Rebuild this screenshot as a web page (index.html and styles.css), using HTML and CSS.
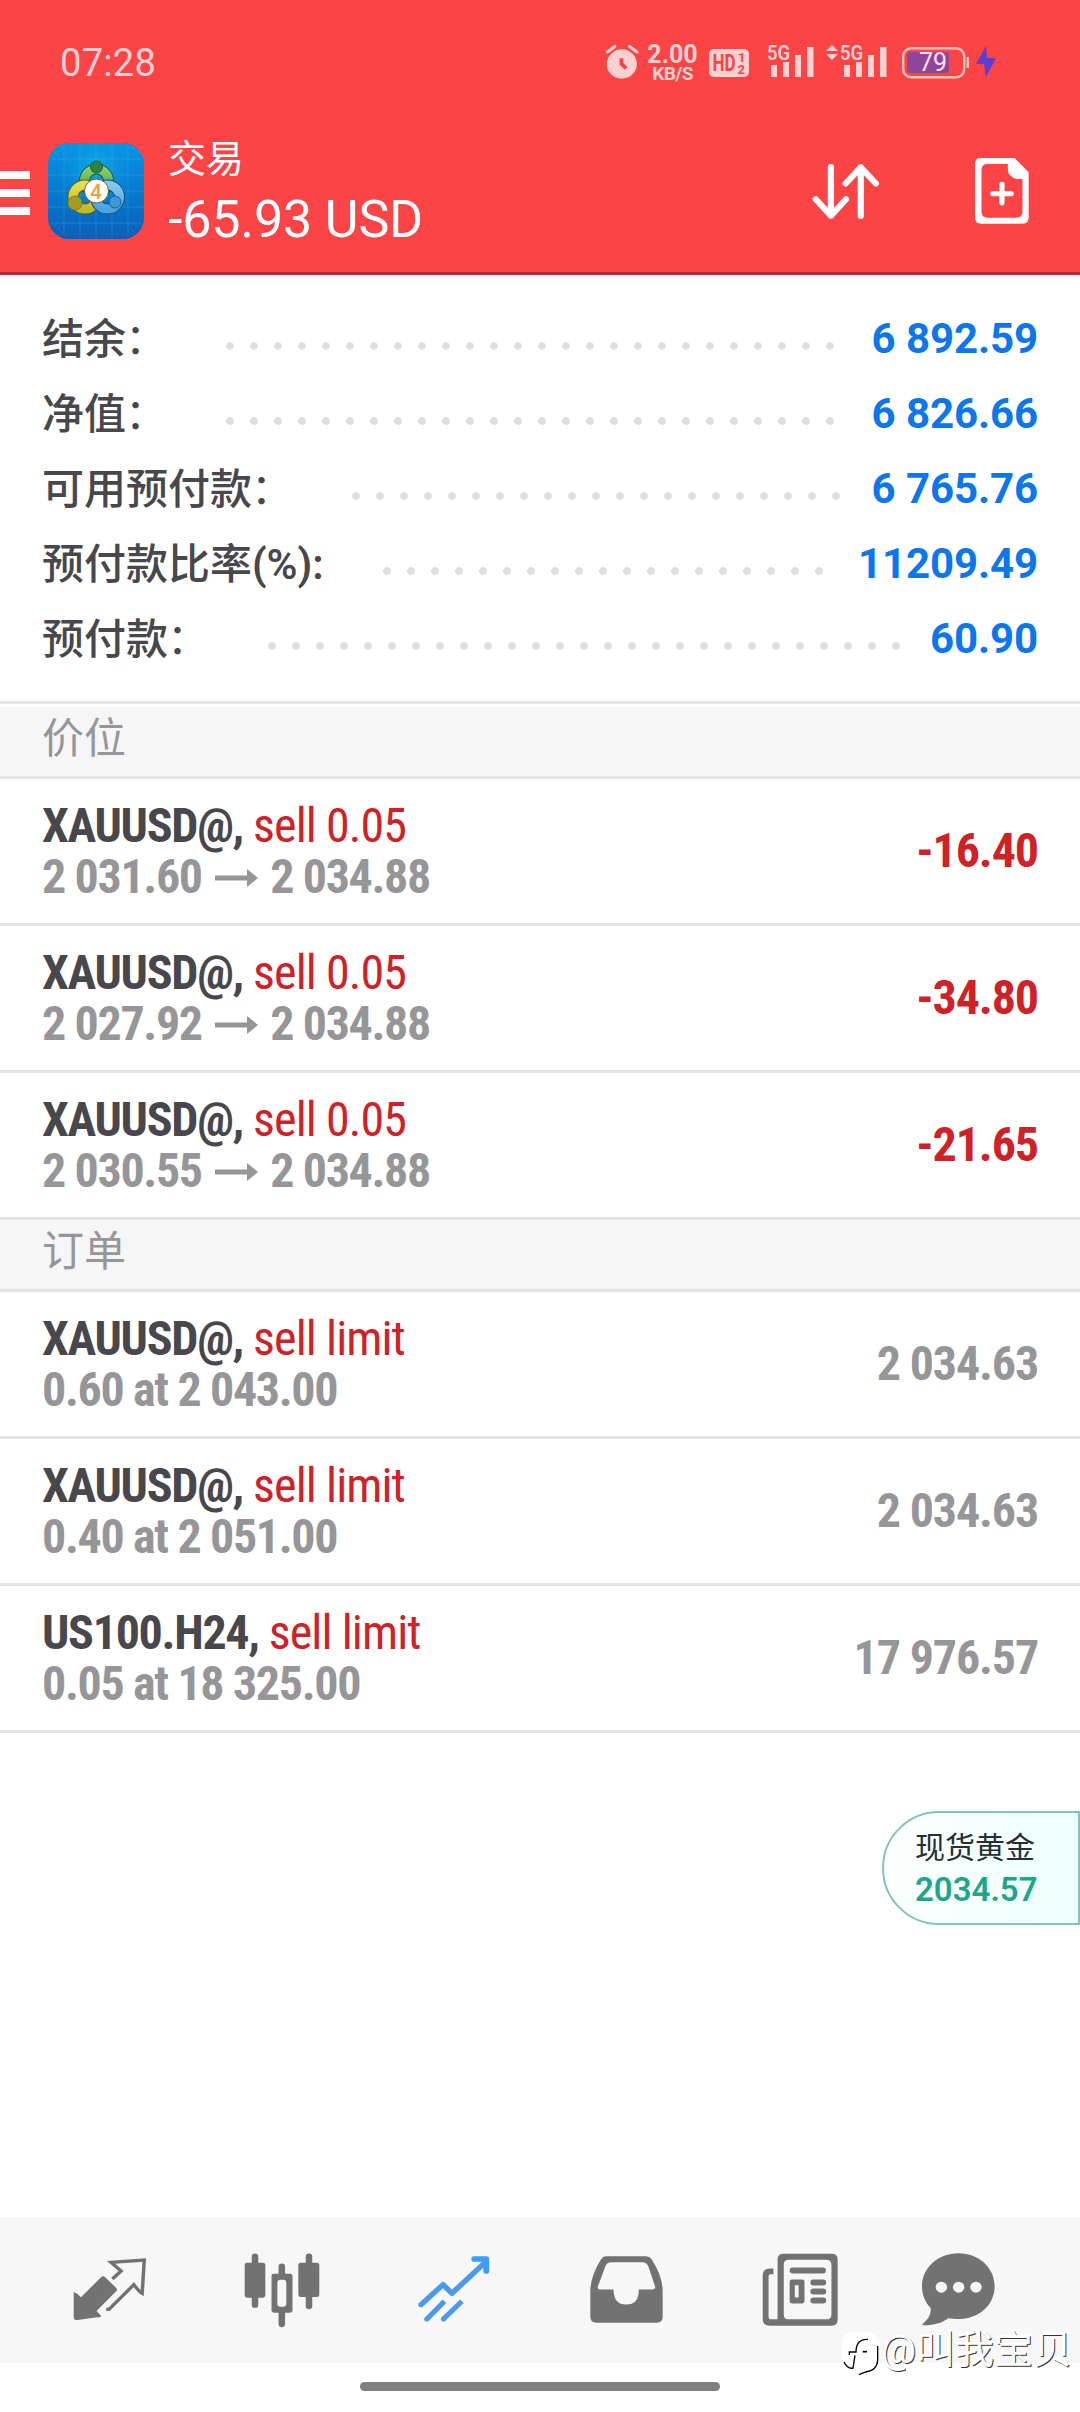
FILE: index.html
```html
<!DOCTYPE html>
<html lang="zh-CN">
<head>
<meta charset="utf-8">
<title>交易</title>
<link rel="stylesheet" href="styles.css">
</head>
<body>
<div class="screen">
  <header class="header">
    <div class="status">
      <span class="clock">07:28</span>
      <div class="indicators">
        <svg class="alarm" viewBox="192 132 96 120" preserveAspectRatio="none"><circle cx="238" cy="192" r="44" fill="#ffd0d0"/><path d="M196 156l22-17M282 156l-22-17" stroke="#ffd0d0" stroke-width="9" stroke-linecap="round"/><path d="M237 175v17l14 13" fill="none" stroke="#f84448" stroke-width="11"/></svg>
        <div class="speed"><span>2.00</span><small>KB/S</small></div>
        <svg class="hd" viewBox="0 0 40 40"><rect y="5" width="40" height="28" rx="5" fill="#ffd0d0"/><text x="3.500" y="27" textLength="23" lengthAdjust="spacingAndGlyphs" class="hd-main">HD</text><text x="29" y="18" class="hd-sub">1</text><text x="28.500" y="30" class="hd-sub">2</text></svg>
        <svg class="sig1" viewBox="0 0 48 40"><text x="0" y="16" textLength="23" lengthAdjust="spacingAndGlyphs" class="net">5G</text><path d="M4 21h6v12h-6zM16 18h6v15h-6zM28 11h6v22h-6zM40 3h6.500v30h-6.500z" fill="#ffd0d0"/></svg>
        <svg class="sig2" viewBox="0 0 62 40"><path d="M6 1l6 6H0zM6 16l6-6H0z" fill="#ffd0d0"/><text x="14" y="16" textLength="23" lengthAdjust="spacingAndGlyphs" class="net">5G</text><path d="M18 21h6v12h-6zM30 18h6v15h-6zM42 11h6v22h-6zM54 3h6.500v30h-6.500z" fill="#ffd0d0"/></svg>
        <svg class="battery" viewBox="0 0 68 40"><rect x="1.200" y="4.200" width="61" height="29" rx="8" fill="none" stroke="#ffc3b8" stroke-width="2.400"/><rect x="5" y="8" width="42" height="21" rx="3" fill="#8f4599"/><rect x="64.500" y="13" width="2.500" height="11" fill="#ffc3b8"/><text x="17" y="27" class="level">79</text></svg>
        <svg class="bolt" viewBox="0 0 22 40"><path d="M11 2L1 20h8l2 13L21 14h-9z" fill="#5c3fd0"/></svg>
      </div>
    </div>
    <div class="appbar">
      <svg class="menu" viewBox="0 0 30 44"><path d="M0 0h30v8H0zM0 18h30v8H0zM0 36h30v8H0z" fill="#fff"/></svg>
      <svg class="logo" viewBox="0 0 96 96">
        <defs>
          <linearGradient id="sky" x1="0" y1="0" x2="0" y2="1"><stop offset="0" stop-color="#0795e5"/><stop offset="1" stop-color="#0860b8"/></linearGradient>
          <radialGradient id="glow"><stop offset="0" stop-color="#10b4ee" stop-opacity=".8"/><stop offset="1" stop-color="#0a8ddd" stop-opacity="0"/></radialGradient>
          <linearGradient id="green" x1="0" y1="0" x2="0" y2="1"><stop offset="0" stop-color="#8fcb70"/><stop offset="1" stop-color="#3a9c4c"/></linearGradient>
          <linearGradient id="yellow" x1="0" y1="0" x2="0" y2="1"><stop offset="0" stop-color="#e4dc52"/><stop offset="1" stop-color="#c2b828"/></linearGradient>
          <linearGradient id="blue" x1="0" y1="0" x2="0" y2="1"><stop offset="0" stop-color="#84c8f0"/><stop offset="1" stop-color="#4ba5e2"/></linearGradient>
          <clipPath id="tile"><rect width="96" height="96" rx="21"/></clipPath>
        </defs>
        <g clip-path="url(#tile)"><rect width="96" height="96" fill="url(#sky)"/><circle cx="48" cy="24" r="40" fill="url(#glow)"/></g>
        <path d="M16 3v90M32 1v94M48 0v96M64 1v94M80 3v90M3 16h90M0 32h96M0 48h96M0 64h96M3 80h90" stroke="#5ac0f4" stroke-opacity=".25"/>
        <circle cx="48.500" cy="38" r="12" fill="none" stroke="#135b2a" stroke-width="11"/><circle cx="48.500" cy="38" r="12" fill="none" stroke="url(#green)" stroke-width="9"/>
        <circle cx="37" cy="54" r="12" fill="none" stroke="#596013" stroke-width="11"/><circle cx="37" cy="54" r="12" fill="none" stroke="url(#yellow)" stroke-width="9"/>
        <circle cx="59.500" cy="54" r="12" fill="none" stroke="#124c75" stroke-width="11"/><circle cx="59.500" cy="54" r="12" fill="none" stroke="url(#blue)" stroke-width="9"/>
        <circle cx="48.500" cy="24" r="6" fill="#2b8443" stroke="#166631"/><circle cx="27" cy="60" r="7" fill="#a79c22" stroke="#807d18"/><circle cx="67" cy="59" r="6" fill="#3f97d6" stroke="#155f98"/>
        <circle cx="48.500" cy="48" r="12" fill="#fff" stroke="#5d6533"/><text x="48" y="55.500" text-anchor="middle" class="logo-num">4</text>
      </svg>
      <div class="titles"><div class="title">交易</div><div class="profit">-65.93 USD</div></div>
      <svg class="sort" viewBox="790 488 198 170" preserveAspectRatio="none"><path d="M845 500v145M801 596l44 49 44-49M932 646V501M888 549l44-48 44 48" fill="none" stroke="#fff" stroke-width="18" stroke-linecap="round" stroke-linejoin="round"/></svg>
      <svg class="new-order" viewBox="1263 474 158 199" preserveAspectRatio="none"><path fill="#fff" fill-rule="evenodd" d="M1281 474h98l41 43v137q0 18-18 18h-121q-18 0-18-18V492q0-18 18-18zM1300 492q-18 0-18 18v126q0 18 18 18h84q18 0 18-18V537h-16q-27-6-27-30v-15z"/><path d="M1315 582h54M1342 553v57" stroke="#fff" stroke-width="15" stroke-linecap="round"/></svg>
    </div>
  </header>

  <section class="account">
    <div class="line"><span>结余<u>：</u></span><i></i><b>6 892.59</b></div>
    <div class="line"><span>净值<u>：</u></span><i></i><b>6 826.66</b></div>
    <div class="line"><span>可用预付款<u>：</u></span><i></i><b>6 765.76</b></div>
    <div class="line"><span class="ratio">预付款比率<strong>(%):</strong></span><i></i><b>11209.49</b></div>
    <div class="line"><span>预付款<u>：</u></span><i></i><b>60.90</b></div>
  </section>

  <h2 class="section first">价位</h2>
  <div class="row"><div class="info"><div><b>XAUUSD@,</b> <em>sell 0.05</em></div><p>2 031.60 <svg class="arrow" viewBox="0 0 43 18"><path d="M0 6.500h32V0l11 9-11 9v-6.500H0z"/></svg> 2 034.88</p></div><strong class="loss">-16.40</strong></div>
  <div class="row"><div class="info"><div><b>XAUUSD@,</b> <em>sell 0.05</em></div><p>2 027.92 <svg class="arrow" viewBox="0 0 43 18"><path d="M0 6.500h32V0l11 9-11 9v-6.500H0z"/></svg> 2 034.88</p></div><strong class="loss">-34.80</strong></div>
  <div class="row"><div class="info"><div><b>XAUUSD@,</b> <em>sell 0.05</em></div><p>2 030.55 <svg class="arrow" viewBox="0 0 43 18"><path d="M0 6.500h32V0l11 9-11 9v-6.500H0z"/></svg> 2 034.88</p></div><strong class="loss">-21.65</strong></div>

  <h2 class="section">订单</h2>
  <div class="row"><div class="info"><div><b>XAUUSD@,</b> <em>sell limit</em></div><p>0.60 at 2 043.00</p></div><strong>2 034.63</strong></div>
  <div class="row"><div class="info"><div><b>XAUUSD@,</b> <em>sell limit</em></div><p>0.40 at 2 051.00</p></div><strong>2 034.63</strong></div>
  <div class="row"><div class="info"><div><b>US100.H24,</b> <em>sell limit</em></div><p>0.05 at 18 325.00</p></div><strong>17 976.57</strong></div>

  <aside class="quote"><span>现货黄金</span><b>2034.57</b></aside>

  <nav class="nav">
    <svg width="74" height="66" viewBox="213 174 214 198" preserveAspectRatio="none"><path d="M215 279q10 3 21 16l58-60q6-6 12 0l32 32q5 5 0 10l-57 59 14 15q-3 5-12 4l-57 8q-11 1-11-10z" fill="#727272"/><path d="M309 331h8l72-74q14 20 24 26l6-100-96 7 29 26-25 24" fill="none" stroke="#727272" stroke-width="10"/></svg>
    <svg width="76" height="75" viewBox="707 157 221 225" preserveAspectRatio="none"><path d="M739 168v144M896 168v148M817 198v172" stroke="#727272" stroke-width="19" stroke-linecap="round"/><rect x="709" y="186" width="60" height="105" rx="7" fill="#727272"/><rect x="865" y="186" width="61" height="103" rx="7" fill="#727272"/><rect x="787" y="219" width="61" height="117" rx="7" fill="#727272"/><rect x="804" y="237" width="26" height="81" rx="9" fill="#f7f7f7"/></svg>
    <svg class="up" width="72" height="68" viewBox="1212 165 210 204" preserveAspectRatio="none"><g fill="none" stroke="#4c99eb"><path d="M1221 314l64-60 26 26 96-92" stroke-width="16" stroke-linecap="round" stroke-linejoin="round"/><path d="M1289 304l-53 55M1340 304l-56 55" stroke-width="15"/><path d="M1376 177h35v36" stroke="#3c9cff" stroke-width="17" stroke-linecap="round" stroke-linejoin="round"/></g><circle cx="1237" cy="358" r="7" fill="#4c99eb"/><circle cx="1286" cy="358" r="7" fill="#4c99eb"/><path d="M1392 177h19v22z" fill="#3c9cff"/></svg>
    <svg class="up" width="73" height="67" viewBox="146 167 211 200" preserveAspectRatio="none"><path fill="#727272" fill-rule="evenodd" d="M192 168h116q10 0 16 9 31 50 32 91v81q0 17-17 17H164q-17 0-17-17v-81q1-41 31-91 5-9 14-9zM208 186q-12 0-17 10l-22 61q-3 10 8 10h37q0 45 37 45t36-45h38q12 0 9-10l-19-58q-5-13-18-13z"/></svg>
    <svg class="up" width="76" height="73" viewBox="645 157 220 220" preserveAspectRatio="none"><path fill="#727272" fill-rule="evenodd" d="M707 159h140q17 0 17 17v182q0 18-17 18H667q-20 0-20-20V225q0-21 21-21h10v17h-9q-5 0-5 9v119q0 8 8 8h18V176q0-17 17-17zM723 177q-15 0-15 14v151q0 15 15 15h107q16 0 16-15V192q0-15-16-15z"/><path d="M734 210h87M794 246h28M794 273h28M794 300h28" stroke="#727272" stroke-width="18" stroke-linecap="round"/><path fill="#727272" fill-rule="evenodd" d="M732 237h29q7 0 7 7v58q0 7-7 7h-29q-7 0-7-7v-58q0-7 7-7zM740 254v37h11v-37z"/></svg>
    <svg class="up" width="73" height="73" viewBox="1108 157 211 220" preserveAspectRatio="none"><path d="M1214 158c58 0 104 44 104 99 0 62-54 110-134 97-22 16-44 22-73 21-3-2-2-5 2-7 17-15 22-33 20-45-18-20-25-43-25-66 0-55 46-99 106-99z" fill="#727272"/><g fill="#f7f7f7"><circle cx="1164" cy="260" r="16.500"/><circle cx="1214" cy="260" r="16.500"/><circle cx="1264" cy="260" r="16.500"/></g></svg>
  </nav>
  <div class="home"></div>
  <div class="watermark"><svg width="42" height="46" viewBox="0 0 126 138"><path d="M33 6h48q33 4 36 42v38q0 34-32 40l-28 14-8-18Q4 118 5 78V44Q7 8 33 6z" fill="#fff"/><path d="M84 28q-36-2-36 38H28v9M45 76l-6 38q-16 4-27-18" fill="none" stroke="#000" stroke-width="4"/><path d="M113 48v42q-2 32-36 36l-20 8" fill="none" stroke="#000" stroke-width="4"/><path d="M68 65h13" stroke="#000" stroke-width="5"/></svg><span>@叫我宝贝</span></div>
</div>
</body>
</html>
```
FILE: styles.css
```css
* { box-sizing: border-box; margin: 0; padding: 0; }
body { background: #fff; font-family: Roboto, "Noto Sans CJK SC", sans-serif; }
svg { display: block; flex: none; overflow: visible; }
.screen { position: relative; width: 1080px; height: 2412px; display: flex; flex-direction: column; overflow: hidden; background: #fff; }

.header { height: 275px; flex: none; background: #fa4446; border-bottom: 3px solid #b52c34; color: #fff; }
.status { display: flex; height: 126px; padding: 44px 0 0 60px; color: #ffd0d0; }
.clock { width: 546px; font-size: 38px; line-height: 38px; letter-spacing: .3px; }
.indicators { display: flex; height: 40px; }
.alarm { width: 33px; height: 40px; }
.speed { width: 51px; margin-left: 8px; display: flex; flex-direction: column; align-items: center; font-weight: 700; }
.speed span { font-size: 25px; line-height: 22px; }
.speed small { font-size: 19px; line-height: 15px; letter-spacing: -.6px; }
.hd { width: 40px; height: 40px; margin-left: 11px; }
.hd-main { font-size: 23px; font-weight: 700; fill: #f84448; }
.hd-sub { font-size: 13px; font-weight: 700; fill: #f84448; }
.sig1 { width: 48px; height: 40px; margin-left: 18px; }
.net { font-size: 21px; font-weight: 600; fill: #ffd0d0; }
.sig2 { width: 62px; height: 40px; margin-left: 11px; }
.battery { width: 68px; height: 40px; margin-left: 14px; }
.level { font-size: 25px; fill: #ffe0f0; }
.bolt { width: 22px; height: 40px; margin-left: 5px; }

.appbar { display: flex; height: 146px; padding-top: 17px; }
.menu { width: 30px; height: 44px; margin-top: 28px; }
.logo { width: 96px; height: 96px; margin-left: 18px; }
.logo-num { font-size: 21px; font-weight: 500; fill: #f4a040; }
.titles { width: 645px; padding-left: 24px; }
.title { margin-top: -10px; font-size: 38px; line-height: 52px; }
.profit { font-size: 52px; line-height: 60px; margin-top: 5px; letter-spacing: -.15px; }
.sort { width: 68px; height: 57px; margin: 20px 0 0 23px; }
.new-order { width: 54px; height: 66px; margin: 15px 0 0 95px; }

.account { height: 426px; flex: none; padding: 26px 42px 0; }
.line { display: flex; height: 75px; line-height: 75px; font-size: 42px; color: #48484c; }
.line span { font-weight: 500; line-height: 77px; }
.line u { margin: 0 1px 0 -1px; text-decoration: none; font-weight: 400; }
.line .ratio { width: 283px; white-space: nowrap; }
.ratio strong { font-weight: 600; }
.line i { flex: 1; height: 8px; margin: 41px 23px 0 50px; background: radial-gradient(circle, #dfdfe0 3.500px, transparent 4.200px) 0 0 / 24px 8px repeat-x; }
.line b { color: #0c76ec; letter-spacing: -.1px; }

.section { flex: none; height: 72px; padding: 5px 42px 0; border-bottom: 3px solid #e3e3e4; background: #f6f6f7; color: #969698; font-size: 42px; font-weight: 400; line-height: 54px; }
.section.first { height: 78px; padding-top: 8px; border-top: 3px solid #e3e3e4; box-shadow: inset 0 3px #fff; }
.row { flex: none; display: flex; justify-content: space-between; height: 147px; padding: 21px 42px 0 42px; border-bottom: 3px solid #e3e3e4; font-family: "Roboto Condensed", Roboto, sans-serif; font-stretch: 75%; font-size: 48px; line-height: 51px; color: #48484c; letter-spacing: -1px; }
.row em { font-style: normal; color: #cf2228; letter-spacing: -.9px; }
.row b { letter-spacing: -1.300px; }
.row p, .row strong { font-weight: 700; color: #969698; }
.row p { letter-spacing: -1.350px; }
.row strong { margin-top: 25px; letter-spacing: -1.150px; }
.row .loss { color: #cf2228; letter-spacing: -1.100px; }
.arrow { display: inline-block; width: 43px; height: 18px; margin: 0 2px 0 4px; fill: #969698; vertical-align: 6px; }

.quote { position: absolute; left: 882px; top: 1811px; width: 198px; height: 114px; padding: 17px 0 0 31px; border: 2px solid #86c3ba; border-radius: 57px 0 0 57px; background: linear-gradient(90deg, #fcffff, #edfffd); display: flex; flex-direction: column; }
.quote span { font-size: 30px; line-height: 36px; color: #252e35; }
.quote b { font-size: 33px; line-height: 47px; font-weight: 600; color: #1da68b; }

.nav { display: grid; grid-template-columns: 172px 172px 172px 173px 173px 144px; justify-items: center; align-items: center; height: 146px; flex: none; margin-top: auto; padding-left: 24px; background: #f7f7f7; }
.nav .up { margin-bottom: 2px; }
.home { flex: none; width: 360px; height: 9px; margin: 19px auto 21px; border-radius: 5px; background: #808080; }
.watermark { position: absolute; left: 840px; top: 2330px; display: flex; }
.watermark span { margin-left: -1px; font-size: 39px; line-height: 40px; color: #fff; text-shadow: 1px 1px 0 #333; white-space: nowrap; }
```
